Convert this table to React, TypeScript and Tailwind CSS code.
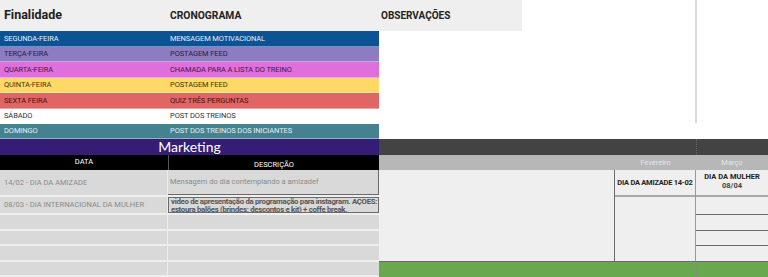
import React from "react";

const rows = [
  { a: "SEGUNDA-FEIRA", b: "MENSAGEM MOTIVACIONAL", bg: "bg-[#0b5394]", fg: "text-[#e8eef6]", h: "h-[16px]" },
  { a: "TERÇA-FEIRA", b: "POSTAGEM FEED", bg: "bg-[#8e7cc3]", fg: "text-[#2a2140]", h: "h-[15px]" },
  { a: "QUARTA-FEIRA", b: "CHAMADA PARA A LISTA DO TREINO", bg: "bg-[#de6fdc]", fg: "text-[#4a1748]", h: "h-[16px]" },
  { a: "QUINTA-FEIRA", b: "POSTAGEM FEED", bg: "bg-[#ffd966]", fg: "text-[#3b3220]", h: "h-[15px]" },
  { a: "SEXTA FEIRA", b: "QUIZ TRÊS PERGUNTAS", bg: "bg-[#e06666]", fg: "text-[#3e1414]", h: "h-[16px]" },
  { a: "SÁBADO", b: "POST DOS TREINOS", bg: "bg-white", fg: "text-[#333333]", h: "h-[15px]" },
  { a: "DOMINGO", b: "POST DOS TREINOS DOS INICIANTES", bg: "bg-[#45818e]", fg: "text-[#e6f0f2]", h: "h-[15px]" },
];

export default function App() {
  return (
    <div className="w-[768px] h-[277px] overflow-hidden bg-white" style={{ fontFamily: "Roboto, 'Liberation Sans', sans-serif" }}>
      {/* top */}
      <div className="flex h-[139px]">
        <div className="w-[695px] flex flex-col">
          <div className="w-[522px] h-[31px] bg-[#efefef] flex items-center font-bold text-[#222]">
            <div className="w-[170px] pl-[4px] text-[12.5px]">Finalidade</div>
            <div className="w-[211px] text-[10.3px]">CRONOGRAMA</div>
            <div className="text-[10px]">OBSERVAÇÕES</div>
          </div>
          {rows.map((r, i) => (
            <div key={i} className={`w-[379px] ${r.h} ${r.bg} ${r.fg} flex items-center text-[7.5px] tracking-[-0.1px] border-b border-white/40`}>
              <div className="w-[170px] pl-[4px]">{r.a}</div>
              <div>{r.b}</div>
            </div>
          ))}
        </div>
        <div className="w-[2px] h-[123px] bg-[#dadada]" />
      </div>

      {/* marketing bar */}
      <div className="flex h-[16px]">
        <div className="w-[379px] bg-[#351c75] text-white text-[14px] leading-[16px] text-center" style={{ fontFamily: "Lato, 'Liberation Sans', sans-serif" }}>
          Marketing
        </div>
        <div className="flex-1 flex bg-[#434343]">
          <div className="w-[317px]" />
          <div className="w-[1px] border-l border-dotted border-[#666]" />
        </div>
      </div>

      {/* header row */}
      <div className="flex h-[15px] text-[7.5px]">
        <div className="w-[168px] bg-black text-white text-center leading-[13px]">DATA</div>
        <div className="w-[211px] bg-black text-white text-center leading-[19px] border-l border-[#555]">DESCRIÇÃO</div>
        <div className="flex-1 flex bg-[#b7b7b7] text-[#e6e6e6]">
          <div className="w-[236px]" />
          <div className="w-[81px] text-center leading-[15px]">Fevereiro</div>
          <div className="flex-1 text-center leading-[15px]">Março</div>
        </div>
      </div>

      {/* body */}
      <div className="flex h-[107px]">
        {/* left table */}
        <div className="w-[379px] flex flex-col bg-[#d9d9d9] text-[7.5px]">
          <div className="flex h-[27px] border-b-2 border-[#eeeeee]">
            <div className="w-[168px] pl-[4px] flex items-center text-[#8a8a8a] border-r border-[#eeeeee]">14/02 - DIA DA AMIZADE</div>
            <div className="flex-1 pl-[2px] flex items-center text-[#8a8a8a] border-r border-b border-[#6b6b6b]">Mensagem do dia contemplando a amizadef</div>
          </div>
          <div className="flex h-[18px] border-b-2 border-[#eeeeee]">
            <div className="w-[168px] pl-[4px] flex items-center text-[#8a8a8a] border-r border-[#eeeeee]">08/03 - DIA INTERNACIONAL DA MULHER</div>
            <div className="flex-1 pl-[2px] text-[#555] text-[7.8px] font-bold leading-[8px] border border-[#6b6b6b] tracking-[-0.3px] whitespace-nowrap overflow-hidden">
              <div>video de apresentação da programação para instagram. AÇÕES:</div>
              <div>estoura balões (brindes: descontos e kit) + coffe break.</div>
            </div>
          </div>
          {[16, 15, 16, 15].map((h, i) => (
            <div key={i} className="flex border-b-2 border-[#eeeeee]" style={{ height: h }}>
              <div className="w-[168px] border-r border-[#eeeeee]" />
              <div className="flex-1" />
            </div>
          ))}
        </div>
        {/* right calendar */}
        <div className="flex-1 flex flex-col">
          <div className="h-[92px] flex bg-[#efefef]">
            <div className="w-[236px] border-r border-b border-[#6b6b6b]" />
            <div className="w-[81px] flex flex-col border-r border-[#999] border-b border-b-[#6b6b6b]">
              <div className="h-[27px] flex items-center justify-center text-[7.5px] font-bold text-[#222] tracking-[-0.25px] whitespace-nowrap border-b-2 border-[#aaaaaa]">DIA DA AMIZADE 14-02</div>
              <div className="flex-1" />
            </div>
            <div className="flex-1 flex flex-col">
              <div className="h-[27px] flex flex-col items-center justify-center text-[7.5px] font-bold text-[#222] leading-[9px] border-b-2 border-[#aaaaaa] pb-[4px]">
                <div>DIA DA MULHER</div>
                <div className="text-[#444]">08/04</div>
              </div>
              <div className="h-[18px] border-b border-[#6b6b6b]" />
              <div className="h-[16px] border-b border-[#6b6b6b]" />
              <div className="h-[15px] border-b border-[#6b6b6b]" />
              <div className="flex-1 border-b border-[#6b6b6b]" />
            </div>
          </div>
          <div className="flex-1 flex bg-[#6aa84f]">
            <div className="w-[317px]" />
            <div className="w-[1px] border-l border-dotted border-[#888]" />
          </div>
        </div>
      </div>
    </div>
  );
}
